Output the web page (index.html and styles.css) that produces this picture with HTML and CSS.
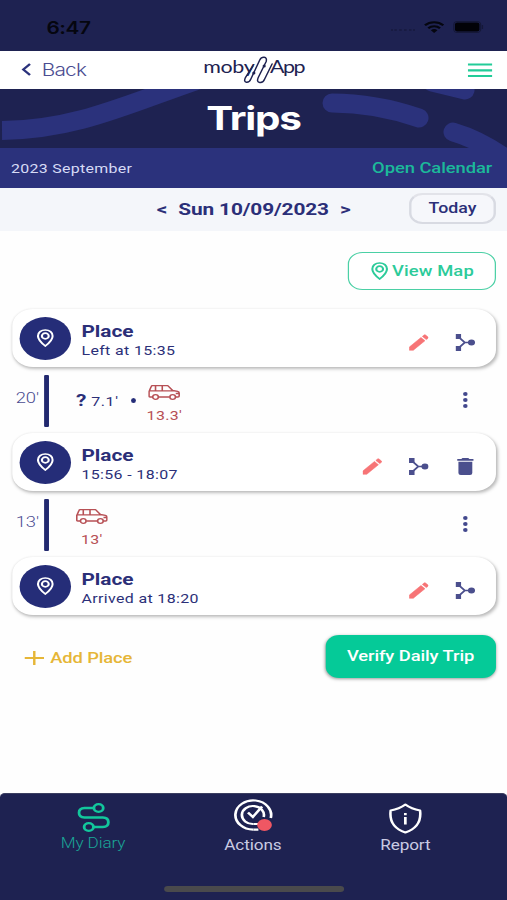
FILE: index.html
```html
<!DOCTYPE html>
<html lang="en">
<head>
<meta charset="utf-8">
<title>Trips</title>
<link rel="stylesheet" href="styles.css">
</head>
<body>
<svg class="defs" width="0" height="0">
  <symbol id="pin" viewBox="0 0 14 18"><path d="M7 1C3.600 1 1 3.600 1 7c0 4.300 6 10 6 10s6-5.700 6-10c0-3.400-2.600-6-6-6z" fill="none" stroke="currentColor" stroke-width="1.700"/><circle cx="7" cy="7" r="2.800" fill="none" stroke="currentColor" stroke-width="1.700"/></symbol>
  <symbol id="pencil" viewBox="2.700 2.700 18.600 18.600"><path d="M3 17.250V21h3.750L17.810 9.940l-3.750-3.750L3 17.250zM20.710 7.040a1 1 0 0 0 0-1.410l-2.340-2.340a1 1 0 0 0-1.410 0l-1.600 1.600 3.750 3.750 1.600-1.600z" fill="currentColor" stroke="currentColor" stroke-width=".6" stroke-linejoin="round"/></symbol>
  <symbol id="branch" viewBox="0 0 16 17"><path d="M2 2.500l5.500 6L2 14.500M7.500 8.500H13" fill="none" stroke="currentColor" stroke-width="1.700"/><path d="M0 0h4.500v5H0zM0 12h4.500v5H0z" fill="currentColor"/><circle cx="13" cy="8.500" r="2.900" fill="currentColor"/></symbol>
  <symbol id="trash" viewBox="5 3 14 18"><path d="M6 19a2 2 0 0 0 2 2h8a2 2 0 0 0 2-2V7H6v12zM19 4h-3.500l-1-1h-5l-1 1H5v2h14V4z" fill="currentColor"/></symbol>
  <symbol id="dots" viewBox="0 0 4 16"><circle cx="2" cy="2" r="1.900" fill="currentColor"/><circle cx="2" cy="8" r="1.900" fill="currentColor"/><circle cx="2" cy="14" r="1.900" fill="currentColor"/></symbol>
  <symbol id="car" viewBox="0 0 26 15"><g fill="none" stroke="currentColor" stroke-width="1.300" stroke-linejoin="round"><path d="M3.500 12H1.500Q.7 12 .7 11V6.500L2.500 1.500Q2.700.7 3.500.7H16L20 5.500l4 .8q1.300.4 1.300 1.700V11q0 1-1 1H22.500M8.500 12h9M1 5.800h19M6 .7V5.800M11.500.7V5.800M22.500 8.500h2.500"/><circle cx="6" cy="12" r="2.300"/><circle cx="20" cy="12" r="2.300"/></g></symbol>
</svg>
<div class="screen">
  <div class="status">
    <span class="clock">6:47</span>
    <span class="signal">
      <i class="cell"></i>
      <svg width="17" height="12" viewBox="0 0 17 12"><g fill="none" stroke="#05060f" stroke-width="2"><path d="M1 4.300a10.600 10.600 0 0 1 15 0M3.700 7.200a6.800 6.800 0 0 1 9.600 0"/></g><path d="M5.800 9.300a3.800 3.800 0 0 1 5.400 0L8.500 12z" fill="#05060f"/></svg>
      <svg width="25" height="12" viewBox="0 0 25 12"><rect x=".5" y=".5" width="22" height="11" rx="3" fill="none" stroke="#151838"/><rect x="1.500" y="1.500" width="20" height="9" rx="2" fill="#020208"/><path d="M24 4v4" stroke="#151838"/></svg>
    </span>
  </div>
  <header class="topbar">
    <span class="back"><svg width="9" height="13" viewBox="0 0 9 13"><path d="M7.500 1L2 6.500 7.500 12" fill="none" stroke="#2b327c" stroke-width="2"/></svg>Back</span>
    <span class="logo"><span class="moby">moby</span><svg width="29" height="28" viewBox="242 56 36 28" preserveAspectRatio="none"><path d="M252.500 66L245 77.500Q243 82 246 82.300T250.500 79L259.500 60Q261 57 264 57.300T266 61.500L258 77.500Q256 82 259.500 82.500T264.500 79L272 64" fill="none" stroke="#1e2251" stroke-width="1.500" stroke-linecap="round"/><circle cx="253.500" cy="73" r="1.600" fill="#1e2251"/><circle cx="264" cy="66" r="1.600" fill="#1e2251"/></svg><span class="app">App</span></span>
    <svg class="menu" width="20" height="15" viewBox="0 0 20 15"><path d="M0 1.500h20M0 7.300h20M0 13h20" stroke="#22cc98" stroke-width="2.200"/></svg>
  </header>
  <section class="hero">
    <svg class="waves" width="414" height="59" viewBox="0 0 507 59" preserveAspectRatio="none"><g fill="none" stroke="#2b327c" stroke-width="19"><path d="M2 41.500C75 41 128 15 198-9"/><path stroke-linecap="round" d="M332 14Q375 14 419 29M432-7L465 1M453 43Q480 51 505 69"/></g></svg>
    <h1>Trips</h1>
  </section>
  <div class="month"><span>2023 September</span><b>Open Calendar</b></div>
  <div class="datebar"><span class="date"><span>&lt;</span><span>Sun 10/09/2023</span><span>&gt;</span></span><span class="today">Today</span></div>
  <main>
    <div class="maprow"><span class="viewmap"><svg width="14" height="18"><use href="#pin"/></svg>View Map</span></div>
    <article class="card">
      <span class="avatar"><svg width="14" height="18"><use href="#pin"/></svg></span>
      <div class="info"><h2>Place</h2><p>Left at 15:35</p></div>
      <div class="tools"><svg class="red"><use href="#pencil"/></svg><svg><use href="#branch"/></svg></div>
    </article>
    <div class="leg">
      <span class="total">20'</span><i class="line"></i>
      <span class="walk"><b>?</b>7.1'</span><i class="dot"></i>
      <span class="ride"><svg><use href="#car"/></svg>13.3'</span>
      <svg class="more"><use href="#dots"/></svg>
    </div>
    <article class="card">
      <span class="avatar"><svg width="14" height="18"><use href="#pin"/></svg></span>
      <div class="info"><h2>Place</h2><p>15:56 - 18:07</p></div>
      <div class="tools"><svg class="red"><use href="#pencil"/></svg><svg><use href="#branch"/></svg><svg><use href="#trash"/></svg></div>
    </article>
    <div class="leg">
      <span class="total">13'</span><i class="line"></i>
      <span class="ride first"><svg><use href="#car"/></svg>13'</span>
      <svg class="more"><use href="#dots"/></svg>
    </div>
    <article class="card">
      <span class="avatar"><svg width="14" height="18"><use href="#pin"/></svg></span>
      <div class="info"><h2>Place</h2><p>Arrived at 18:20</p></div>
      <div class="tools"><svg class="red"><use href="#pencil"/></svg><svg><use href="#branch"/></svg></div>
    </article>
    <div class="actions">
      <span class="add"><svg width="16" height="16" viewBox="0 0 16 16"><path d="M8 1v14M0 8h16" stroke="#e6b637" stroke-width="2"/></svg>Add Place</span>
      <span class="verify">Verify Daily Trip</span>
    </div>
  </main>
  <nav>
    <div class="tab active"><svg width="27" height="29" viewBox="0 0 27 29"><g fill="none" stroke="#12c79c" stroke-width="2.300"><circle cx="17.500" cy="5" r="3.800"/><circle cx="9.500" cy="24" r="3.800"/><path d="M13.700 5H6Q1.500 5.300 1.500 9.700T6 14.500H21q4.500.2 4.500 4.800T21 24H13.300"/></g></svg><span>My Diary</span></div>
    <div class="tab mid"><svg width="33" height="34" viewBox="0 0 33 34"><g fill="none" stroke="#fff" stroke-width="2.200"><path d="M31.100 20A14.600 14.600 0 1 0 17 31.600"/><path d="M25.300 19A9 9 0 1 0 17 26"/><path d="M12.500 14.500l4 4.500L24 8.500M17 31.600h4M17 26h4"/></g><circle cx="26" cy="27" r="6" fill="#ef5763"/></svg><span>Actions</span></div>
    <div class="tab"><svg width="28" height="31" viewBox="0 0 28 31"><path d="M14 1.500Q9 6 2 7.500C1 17 4 25.500 14 29.500 24 25.500 27 17 26 7.500Q19 6 14 1.500z" fill="none" stroke="#fff" stroke-width="2.100" stroke-linejoin="round"/><path d="M14 14v7.500M14 10v2.300" stroke="#fff" stroke-width="2.200"/></svg><span>Report</span></div>
    <i class="home"></i>
  </nav>
</div>
</body>
</html>
```
FILE: styles.css
```css
* { box-sizing: border-box; }
html, body { margin: 0; overflow: hidden; }
body { width: 507px; height: 900px; background: #fff; font-family: Roboto, "Liberation Sans", sans-serif; color: #2b2f78; }
h1, h2, p { margin: 0; }
svg { display: block; flex: none; }
i { display: block; flex: none; }
.defs { display: none; }

/* The 414px phone layout is widened to fill the window. */
.screen { width: 414px; height: 900px; display: flex; flex-direction: column; transform: scaleX(1.22464); transform-origin: 0 0; background: #fefefe; }

.status { height: 51px; flex: none; background: #1e2251; display: flex; justify-content: space-between; align-items: center; padding: 4px 19px 0 38px; color: #05060f; }
.clock { font: 600 17px Inter, sans-serif; letter-spacing: -.4px; }
.signal { display: flex; align-items: center; gap: 7px; }
.signal svg { margin-top: -2px; }
.cell { width: 20px; border-top: 2px dotted #181b42; margin-top: 4px; }

.topbar { height: 38px; flex: none; background: #fff; display: grid; grid-template-columns: 166px 1fr auto; padding: 0 12px 0 0; align-items: center; }
.back { display: flex; align-items: center; gap: 8px; padding-left: 17px; margin-top: -1px; font: 300 17px Inter, sans-serif; letter-spacing: -.6px; color: #4b4c91; }
.logo { display: flex; align-items: flex-start; color: #1e2251; font: 400 17.500px/22px Lato, sans-serif; letter-spacing: -.3px; height: 28px; }
.logo svg { margin: 0 -6.500px 0 0; }
.logo .moby { width: 32px; }
.logo .app { letter-spacing: -1.200px; }

.hero { height: 59px; flex: none; position: relative; background: #1e2251; overflow: hidden; }
.waves { position: absolute; inset: 0; }
.hero h1 { position: relative; text-align: center; color: #fff; font: 700 33px/59px Inter, sans-serif; letter-spacing: -1px; }

.month { height: 40px; flex: none; background: #2b327c; display: flex; justify-content: space-between; align-items: center; padding: 0 12px 0 9px; color: #d7dbf6; font-size: 13px; letter-spacing: .25px; }
.month b { color: #1cb99a; font-size: 15px; font-weight: 500; letter-spacing: -.05px; }

.datebar { height: 43px; flex: none; background: #f4f6fa; display: grid; grid-template-columns: 1fr auto; align-items: center; padding: 0 9px 0 128px; }
.date { display: flex; gap: 9px; margin-top: -1px; font-size: 17px; font-weight: 700; letter-spacing: -.1px; }
.today { width: 71px; height: 31px; margin-top: -3px; border: 2px solid #d8dae2; border-top-color: #e2e3e9; border-radius: 11px; text-align: center; font-size: 14.500px; line-height: 28px; font-weight: 500; background: #f6f7fb; }

main { padding: 21px 9px 0 10px; flex: 1; }
.maprow { display: flex; justify-content: flex-end; margin-bottom: 19px; }
.viewmap { width: 121px; height: 38px; border: 1.500px solid #4bd0a5; border-radius: 12px; display: flex; align-items: center; justify-content: center; gap: 3px; padding-left: 1px; color: #2ccb9a; font-size: 15px; font-weight: 500; letter-spacing: .1px; background: #fff; }

.card { height: 58px; background: #fff; border-radius: 17px; box-shadow: 1px 2px 3px rgba(0,0,0,.25), 0 0 2px rgba(0,0,0,.08); display: flex; align-items: center; padding: 0 17.500px 0 6px; }
.avatar { width: 42px; height: 43px; border-radius: 50%; background: #252d78; color: #fff; display: flex; align-items: center; justify-content: center; }
.info { margin-left: 8.500px; flex: 1; padding-top: 5px; }
.info h2 { font-size: 17px; line-height: 20px; font-weight: 700; }
.info p { margin-top: 1px; font-size: 13px; line-height: 18px; letter-spacing: .3px; }
.tools { display: flex; gap: 22px; color: #4b4f8d; padding-top: 8px; }
.tools svg { width: 16px; height: 17px; }
.tools .red { color: #f77476; }

.leg { height: 66px; display: flex; align-items: center; padding-right: 23px; }
.total { width: 22px; text-align: right; font-size: 15px; font-weight: 300; color: #4b4c91; margin-top: -5px; }
.line { width: 4px; height: 52px; background: #22296f; margin: 1px 0 0 4px; border-radius: 1px; }
.walk { margin-left: 22px; font-size: 13px; letter-spacing: .5px; display: flex; gap: 4px; align-items: baseline; }
.walk b { font-size: 17px; letter-spacing: 0; }
.dot { width: 4px; height: 5px; border-radius: 50%; background: #252d78; margin-left: 10px; }
.ride { margin-left: 9px; width: 28px; display: flex; flex-direction: column; align-items: center; color: #b75055; font-size: 13px; line-height: 17px; letter-spacing: .3px; gap: 7px; margin-top: 8px; }
.ride:not(.first) { padding-left: 1px; }
.ride svg { width: 26px; height: 15px; }
.first { margin-left: 21px; }
.more { width: 4px; height: 16px; color: #42488d; margin-left: auto; }

.actions { display: flex; justify-content: space-between; align-items: center; margin-top: 20px; padding-left: 10px; }
.add { display: flex; align-items: center; gap: 5px; padding-top: 3px; color: #e6b637; font-size: 15px; font-weight: 500; letter-spacing: -.1px; }
.verify { width: 139.500px; height: 43px; border-radius: 11px; background: #05ca98; box-shadow: 0 1px 3px rgba(0,0,0,.4); color: #fff; text-align: center; font-size: 15px; font-weight: 500; line-height: 43px; letter-spacing: -.08px; }

nav { height: 107px; flex: none; background: #1e2251; border-top: 1px solid #3b3e60; border-radius: 4px 4px 0 0; position: relative; display: grid; grid-template-columns: 152px 109px 140px; padding-top: 9px; }
.tab { display: flex; flex-direction: column; align-items: center; color: #c9cbe3; font-size: 14px; line-height: 20px; font-weight: 400; letter-spacing: -.1px; }
.tab svg { margin-bottom: 1px; }
.tab.mid { margin-top: -5px; }
.tab.mid svg { margin-bottom: 3px; }
.tab.active { color: #1aa697; font-weight: 300; }
.home { position: absolute; left: 134px; top: 92px; width: 147px; height: 6px; border-radius: 3px; background: #4a4a4c; }
```
